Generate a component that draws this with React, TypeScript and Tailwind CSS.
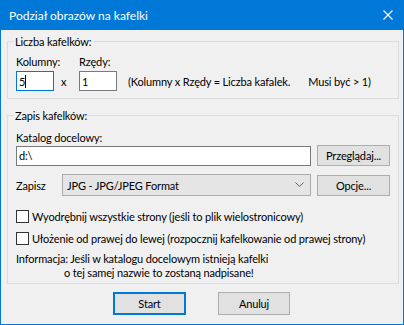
export default function App() {
  return (
    <div className="w-[404px] h-[325px] bg-[#0078d7] flex flex-col font-['Lato','Liberation_Sans',sans-serif] text-[11px] tracking-[-0.15px] leading-[15px] text-black whitespace-nowrap">
      <div className="h-[30px] shrink-0 flex items-center justify-between pl-[9px] pr-[11px] text-white text-[12px] tracking-normal">
        <span>Podział obrazów na kafelki</span>
        <svg width="10" height="10" viewBox="0 0 10 10">
          <path d="M0.5 0.5 L9.5 9.5 M9.5 0.5 L0.5 9.5" stroke="#fff" strokeWidth="1.1" />
        </svg>
      </div>

      <div className="flex-1 mx-px mb-px bg-[#f0f0f0] pl-[6px] pr-[4px] pt-[4px] flex flex-col">
        <fieldset className="border border-[#dcdcdc] px-[8px] pb-[7px]">
          <legend className="ml-[-2px] px-[1px]">Liczba kafelków:</legend>
          <div className="flex items-end mt-[5px]">
            <div className="w-[38px] flex flex-col">
              <span>Kolumny:</span>
              <div className="mt-[2px] w-[38px] h-[20px] bg-white border border-[#0078d7] flex items-center pl-[2px]">
                <span>5</span>
                <span className="w-px h-[13px] bg-black" />
              </div>
            </div>
            <div className="h-[20px] w-[25px] pl-[7px] flex items-center">x</div>
            <div className="w-[38px] flex flex-col">
              <span>Rzędy:</span>
              <div className="mt-[2px] w-[38px] h-[20px] bg-white border border-[#7a7a7a] flex items-center pl-[2px]">
                1
              </div>
            </div>
            <div className="h-[20px] flex items-center ml-[11px]">
              <span>(Kolumny x Rzędy = Liczba kafalek.</span>
              <span className="ml-[18px]">Musi być &gt; 1)</span>
            </div>
          </div>
        </fieldset>

        <fieldset className="mt-[9px] border border-[#dcdcdc] px-[8px] pb-[3px]">
          <legend className="ml-[-2px] px-[1px]">Zapis kafelków:</legend>
          <div className="mt-[7px]">Katalog docelowy:</div>
          <div className="flex items-center">
            <div className="w-[295px] h-[20px] bg-white border border-[#7a7a7a] flex items-center pl-[2px]">d:\</div>
            <button className="ml-[6px] w-[73px] h-[21px] bg-[#e1e1e1] border border-[#adadad] flex items-center justify-center">
              Przeglądaj...
            </button>
          </div>
          <div className="flex items-center mt-[8px]">
            <span className="w-[46px]">Zapisz</span>
            <div className="w-[249px] h-[22px] bg-[#e5e5e5] border border-[#acacac] flex items-center justify-between pl-[4px] pr-[6px]">
              <span>JPG - JPG/JPEG Format</span>
              <svg width="9" height="6" viewBox="0 0 9 6">
                <path d="M0.5 0.5 L4.5 4.5 L8.5 0.5" fill="none" stroke="#606060" strokeWidth="1" />
              </svg>
            </div>
            <button className="ml-[6px] w-[73px] h-[21px] bg-[#e1e1e1] border border-[#adadad] flex items-center justify-center">
              Opcje...
            </button>
          </div>
          <div className="flex items-center h-[15px] mt-[13px]">
            <span className="w-[13px] h-[13px] bg-white border border-[#333333]" />
            <span className="ml-[3px]">Wyodrębnij wszystkie strony (jeśli to plik wielostronicowy)</span>
          </div>
          <div className="flex items-center h-[15px] mt-[7px]">
            <span className="w-[13px] h-[13px] bg-white border border-[#333333]" />
            <span className="ml-[3px]">Ułożenie od prawej do lewej (rozpocznij kafelkowanie od prawej strony)</span>
          </div>
          <div className="mt-[6px] leading-[14px]">
            <div>Informacja: Jeśli w katalogu docelowym istnieją kafelki</div>
            <div className="pl-[48px]">o tej samej nazwie to zostaną nadpisane!</div>
          </div>
        </fieldset>

        <div className="flex gap-[32px] pl-[106px] mt-[8px]">
          <button className="w-[73px] h-[23px] bg-[#e1e1e1] border-2 border-[#0078d7] flex items-center justify-center">
            Start
          </button>
          <button className="w-[72px] h-[23px] bg-[#e1e1e1] border border-[#adadad] flex items-center justify-center">
            Anuluj
          </button>
        </div>
      </div>
    </div>
  );
}
